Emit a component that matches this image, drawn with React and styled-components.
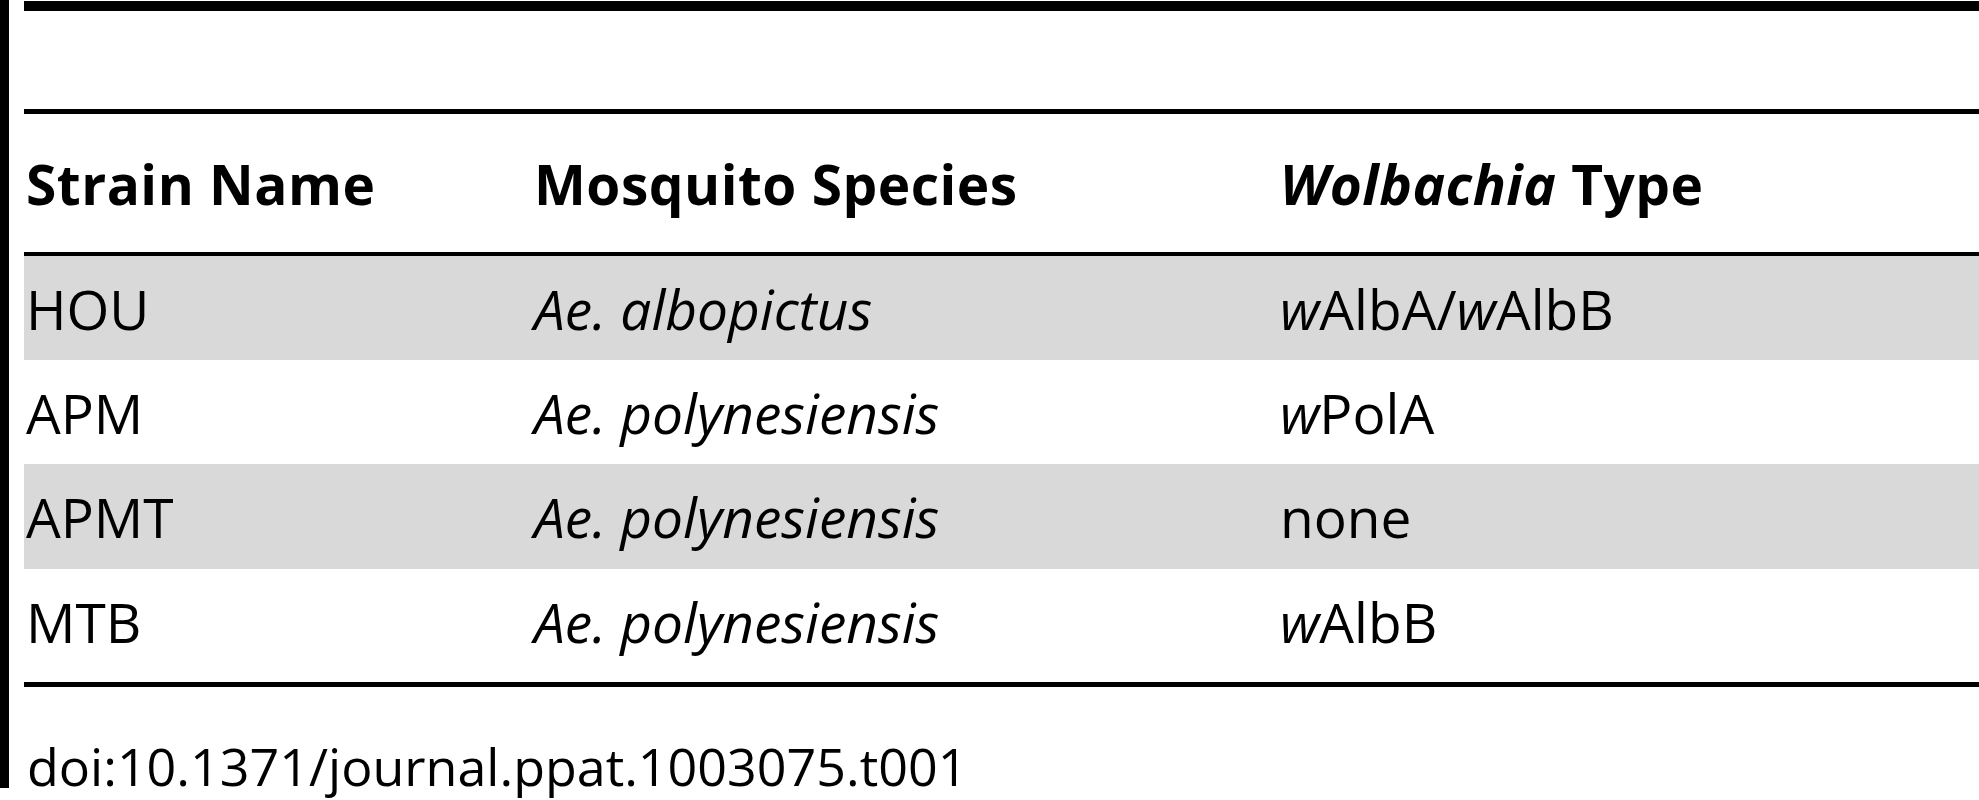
import React from "react";
import styled, { createGlobalStyle } from "styled-components";

const Global = createGlobalStyle`
  html, body { margin: 0; padding: 0; background: #fff; }
  body { font-family: "Open Sans", "Liberation Sans", sans-serif; color: #000; }
`;

const Page = styled.div`
  width: 1979px;
  height: 800px;
  overflow: hidden;
  background: #fff;
`;

const Frame = styled.div`
  display: flex;
  flex-direction: column;
  width: 1979px;
  box-sizing: border-box;
  border-left: 9px solid #000;
  padding-left: 15px;
`;

const Rule = styled.div`
  height: ${(p) => p.$h}px;
  margin-top: ${(p) => p.$mt || 0}px;
  background: #000;
`;

const Spacer = styled.div`
  height: ${(p) => p.$h}px;
`;

const Row = styled.div`
  display: grid;
  grid-template-columns: 508px 746px 1fr;
  align-items: center;
  height: ${(p) => p.$h}px;
  box-sizing: border-box;
  padding-bottom: ${(p) => p.$pb || 0}px;
  background: ${(p) => (p.$shade ? "#d9d9d9" : "#fff")};
  font-size: 55px;
  font-weight: ${(p) => (p.$head ? 700 : 400)};
  letter-spacing: ${(p) => (p.$head ? "0.5px" : "0")};
  line-height: 1;
`;

const Cell = styled.div`
  padding-left: 2px;
  white-space: nowrap;
`;

const Em = styled.i`
  font-style: italic;
`;

const Caption = styled.div`
  height: 101px;
  display: flex;
  align-items: flex-end;
  padding-left: 3px;
  font-size: 52px;
  line-height: 0.85;
  white-space: nowrap;
`;

const rows = [
  { strain: "HOU", species: "Ae. albopictus", type: <><Em>w</Em>AlbA/<Em>w</Em>AlbB</>, h: 104, shade: true },
  { strain: "APM", species: "Ae. polynesiensis", type: <><Em>w</Em>PolA</>, h: 104 },
  { strain: "APMT", species: "Ae. polynesiensis", type: "none", h: 105, shade: true },
  { strain: "MTB", species: "Ae. polynesiensis", type: <><Em>w</Em>AlbB</>, h: 113, pb: 8 },
];

export default function App() {
  return (
    <Page>
      <Global />
      <Frame>
        <Rule $h={10} $mt={1} />
        <Spacer $h={98} />
        <Rule $h={5} />
        <Row $h={138} $head>
          <Cell>Strain Name</Cell>
          <Cell>Mosquito Species</Cell>
          <Cell><Em>Wolbachia</Em> Type</Cell>
        </Row>
        <Rule $h={4} />
        {rows.map((r) => (
          <Row key={r.strain} $h={r.h} $shade={r.shade} $pb={r.pb}>
            <Cell>{r.strain}</Cell>
            <Cell><Em>{r.species}</Em></Cell>
            <Cell>{r.type}</Cell>
          </Row>
        ))}
        <Rule $h={5} />
        <Caption>doi:10.1371/journal.ppat.1003075.t001</Caption>
      </Frame>
    </Page>
  );
}
